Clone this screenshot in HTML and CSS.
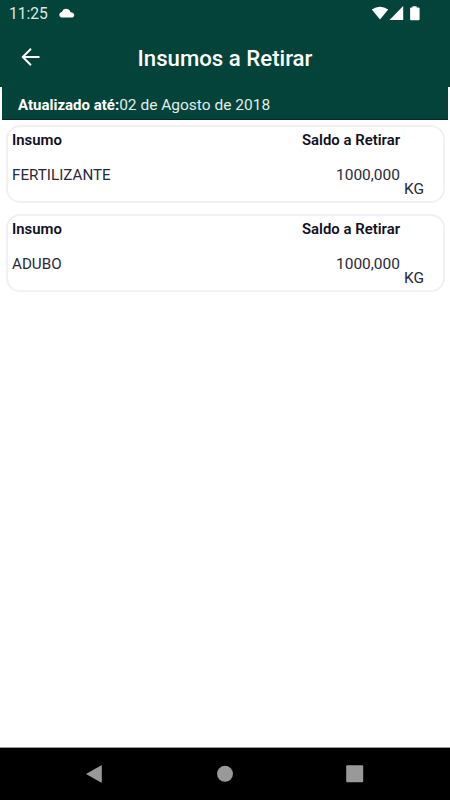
FILE: index.html
```html
<!DOCTYPE html>
<html lang="pt-BR">
<head>
<meta charset="utf-8">
<title>Insumos a Retirar</title>
<link rel="stylesheet" href="styles.css">
</head>
<body>
<header class="top">
  <div class="status">
    <span class="clock">11:25</span>
    <svg class="cloud" width="16" height="10" viewBox="0 0 16 10"><path d="M3.300 9.600C1.500 9.600.3 8.500.3 7c0-1.600 1.100-2.700 2.600-2.900C3.700 2 5 .8 7 .8c2.500 0 4 1.500 4.500 3.500 2.200.2 3.700 1.100 3.700 2.900 0 1.500-1.100 2.400-2.700 2.400z"/></svg>
    <svg class="signals" width="50" height="16" viewBox="0 0 50 16"><path d="M.8 3.400Q9-1.900 17.200 3.400L9 13.600zM32.200 0v13.900H18.500zM41.400.2h4.200v1.200h1.900q1.100 0 1.100 1.100v10.700q0 1.100-1.100 1.100h-7.300q-1.100 0-1.100-1.100V2.500q0-1.100 1.100-1.100h1.200z"/></svg>
  </div>
  <div class="appbar">
    <svg class="back" width="20" height="20" viewBox="0 0 20 20"><path d="M19.500 10H2.800M11 1.800L2.800 10l8.200 8.200"/></svg>
    <h1 class="title">Insumos a Retirar</h1>
  </div>
</header>
<main class="content">
  <div class="updated"><b>Atualizado até:</b><span class="date">02 de Agosto de 2018</span></div>
  <section class="card">
    <div class="row head"><span>Insumo</span><span>Saldo a Retirar</span></div>
    <div class="row value"><span class="name">FERTILIZANTE</span><span>1000,000</span></div>
    <div class="unit">KG</div>
  </section>
  <section class="card">
    <div class="row head"><span>Insumo</span><span>Saldo a Retirar</span></div>
    <div class="row value"><span class="name">ADUBO</span><span>1000,000</span></div>
    <div class="unit">KG</div>
  </section>
</main>
<nav class="nav">
  <svg width="18" height="20" viewBox="0 0 18 20"><path d="M1 10L16 1.400q.8-.3.800.5v16q0 .9-.8.500z"/></svg>
  <svg width="18" height="20" viewBox="0 0 18 20"><circle cx="9" cy="9.800" r="8"/></svg>
  <svg width="18" height="20" viewBox="0 0 18 20"><rect x=".2" y="1.300" width="17" height="17" rx="1"/></svg>
</nav>
</body>
</html>
```
FILE: styles.css
```css
* { box-sizing: border-box; }
body {
  margin: 0;
  height: 800px;
  display: flex;
  flex-direction: column;
  overflow: hidden;
  background: #fff;
  color: #10101f;
  font-family: Roboto, sans-serif;
  font-size: 15.500px;
  font-weight: 400;
}
.top { height: 87px; background: #04433a; color: #fff; }
.status { height: 28px; display: flex; align-items: center; padding: 0 29px 0 9px; }
.clock { width: 50px; font-size: 15.600px; line-height: 28px; color: #dfe9e7; }
.cloud, .signals { fill: #fff; }
.cloud { margin-top: -2px; }
.signals { margin: 1px 0 2px auto; }
.appbar {
  height: 59px;
  display: grid;
  grid-template-columns: 28px 1fr 28px;
  align-items: center;
  padding: 0 20px;
}
.back { fill: none; stroke: #fff; stroke-width: 2; margin-top: -2px; }
.title { margin: 1px 0 0; text-align: center; font-size: 22.200px; font-weight: 500; line-height: 28px; }
.content { flex: 1; padding: 0 2px; }
.updated {
  height: 33px;
  margin-bottom: 5px;
  padding-left: 16px;
  background: #04433a;
  border-bottom: 1px solid #062b22;
  color: #fff;
  line-height: 36px;
  white-space: nowrap;
}
.updated b { font-size: 15px; font-weight: 700; }
.date { color: #e3ece9; }
.card {
  height: 78px;
  margin: 0 3.500px 11px;
  padding: 4px 18.500px 0 4.500px;
  border: 2px solid #f0f0f6;
  border-radius: 14px;
}
.row { display: flex; justify-content: space-between; padding-right: 24px; line-height: 18px; }
.head { font-weight: 600; font-size: 14.900px; }
.value, .unit { color: #28283a; }
.value { margin-top: 17px; }
.name { font-size: 15.200px; }
.unit { margin-top: -4px; text-align: right; line-height: 18px; }
.nav {
  height: 53px;
  display: flex;
  justify-content: space-between;
  align-items: center;
  padding: 0 86px 0 85px;
  border-top: 1px solid #999;
  background: #000;
}
.nav svg { fill: #999; }
```
